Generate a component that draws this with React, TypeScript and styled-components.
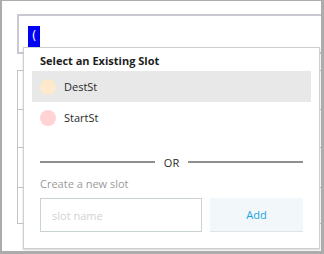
import React from "react";
import styled, { createGlobalStyle } from "styled-components";

const Global = createGlobalStyle`
  html, body { margin: 0; padding: 0; background: #fff; }
  body { font-family: "Open Sans", "Liberation Sans", sans-serif; }
  * { box-sizing: border-box; }
`;

const Frame = styled.div`
  position: relative;
  width: 324px;
  height: 254px;
  border-style: solid;
  border-color: #acacac;
  border-width: 1px 3px 3px 2px;
  overflow: hidden;
  padding: 13px 0 0 15px;
  background: #fff;
`;

const Editor = styled.div`
  width: 320px;
  height: 40px;
  border: 2px solid #c9c9d1;
  padding: 7px 0 0 9px;
`;

const Selection = styled.span`
  display: inline-block;
  width: 12px;
  height: 21px;
  background: #0000f5;
  color: #fff;
  font-family: "DejaVu Sans", sans-serif;
  font-size: 12px;
  line-height: 21px;
  text-align: center;
`;

const Table = styled.div`
  margin-top: 16px;
  width: 305px;
  border-left: 1px solid #c4c4c4;
  border-right: 1px solid #c4c4c4;
`;

const TableRow = styled.div<{ $h: number }>`
  height: ${(p) => p.$h}px;
  border-top: 1px solid #c4c4c4;
  &:last-child { border-bottom: 1px solid #c4c4c4; }
`;

const Popup = styled.div`
  position: absolute;
  left: 21px;
  top: 46px;
  width: 297px;
  height: 202px;
  background: #fff;
  border: 1px solid #cfcfcf;
  box-shadow: 0 1px 2px rgba(0, 0, 0, 0.18);
  padding: 5px 8px 0 8px;
`;

const Title = styled.div`
  font-size: 11px;
  font-weight: 700;
  color: #1e1e1e;
  line-height: 15px;
  padding-left: 8px;
  margin-bottom: 3px;
`;

const Option = styled.div<{ $active?: boolean }>`
  display: flex;
  align-items: center;
  gap: 8px;
  height: 31px;
  padding-left: 8px;
  background: ${(p) => (p.$active ? "#e8e8e8" : "transparent")};
  font-size: 11px;
  color: #2a2a2a;
`;

const Dot = styled.span<{ $color: string }>`
  width: 16px;
  height: 16px;
  border-radius: 50%;
  background: ${(p) => p.$color};
  flex: none;
`;

const Section = styled.div`
  padding: 0 8px 0 8px;
`;

const Divider = styled.div`
  display: flex;
  align-items: center;
  gap: 9px;
  margin-top: 22px;
  height: 14px;
  font-size: 11px;
  color: #2a2a2a;
  &::before, &::after {
    content: "";
    flex: 1;
    height: 2px;
    background: #8f8f8f;
  }
`;

const Hint = styled.div`
  margin-top: 8px;
  font-size: 11px;
  color: #9a9a9a;
  line-height: 14px;
`;

const CreateRow = styled.div`
  display: flex;
  gap: 8px;
  margin-top: 7px;
`;

const NameInput = styled.input`
  width: 162px;
  height: 34px;
  border: 1.5px solid #c9d3d0;
  padding: 0 0 0 11px;
  font-family: inherit;
  font-size: 11px;
  outline: none;
  &::placeholder { color: #d2d2d2; }
`;

const AddButton = styled.button`
  flex: 1;
  height: 34px;
  border: none;
  border-bottom: 1.5px solid #dfe4e6;
  background: #f2f8fa;
  color: #1ca3e3;
  font-family: inherit;
  font-size: 11px;
  font-weight: 500;
`;

export default function App() {
  return (
    <>
      <Global />
      <Frame>
        <Editor>
          <Selection>(</Selection>
        </Editor>
        <Table>
          <TableRow $h={39} />
          <TableRow $h={38} />
          <TableRow $h={40} />
          <TableRow $h={37} />
        </Table>
        <Popup>
          <Title>Select an Existing Slot</Title>
          <Option $active>
            <Dot $color="#fde9cb" />
            DestSt
          </Option>
          <Option>
            <Dot $color="#ffd3d3" />
            StartSt
          </Option>
          <Section>
            <Divider>OR</Divider>
            <Hint>Create a new slot</Hint>
            <CreateRow>
              <NameInput placeholder="slot name" />
              <AddButton>Add</AddButton>
            </CreateRow>
          </Section>
        </Popup>
      </Frame>
    </>
  );
}
